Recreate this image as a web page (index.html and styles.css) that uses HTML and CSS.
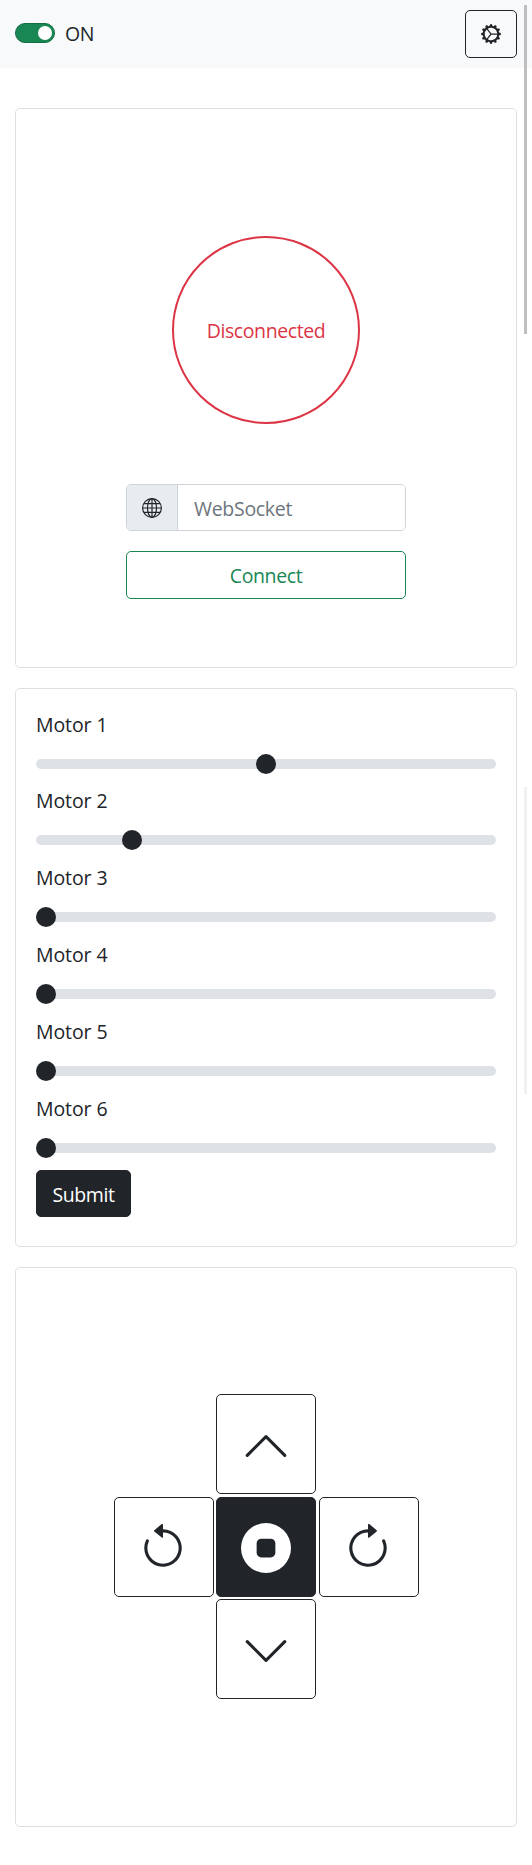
FILE: index.html
```html
<!DOCTYPE html>
<html lang="en">
<head>
<meta charset="utf-8">
<title>Robot control</title>
<link rel="stylesheet" href="styles.css">
</head>
<body>
<header class="navbar">
  <label class="power"><span class="switch"><span class="switch-knob"></span></span><span class="power-text">ON</span></label>
  <button class="btn btn-settings" type="button" aria-label="Settings">
    <svg class="icon" viewBox="0 0 16 16"><path d="M7.068.727c.243-.97 1.62-.97 1.864 0l.071.286a.96.96 0 0 0 1.622.434l.205-.211c.695-.719 1.888-.03 1.613.931l-.08.284a.96.96 0 0 0 1.187 1.187l.283-.081c.96-.275 1.65.918.931 1.613l-.211.205a.96.96 0 0 0 .434 1.622l.286.071c.97.243.97 1.62 0 1.864l-.286.071a.96.96 0 0 0-.434 1.622l.211.205c.719.695.03 1.888-.931 1.613l-.284-.08a.96.96 0 0 0-1.187 1.187l.081.283c.275.96-.918 1.65-1.613.931l-.205-.211a.96.96 0 0 0-1.622.434l-.071.286c-.243.97-1.62.97-1.864 0l-.071-.286a.96.96 0 0 0-1.622-.434l-.205.211c-.695.719-1.888.03-1.613-.931l.08-.284a.96.96 0 0 0-1.186-1.187l-.284.081c-.96.275-1.65-.918-.931-1.613l.211-.205a.96.96 0 0 0-.434-1.622l-.286-.071c-.97-.243-.97-1.62 0-1.864l.286-.071a.96.96 0 0 0 .434-1.622l-.211-.205c-.719-.695-.03-1.888.931-1.613l.284.08a.96.96 0 0 0 1.187-1.186l-.081-.284c-.275-.96.918-1.65 1.613-.931l.205.211a.96.96 0 0 0 1.622-.434l.071-.286zM12.973 8.5H8.25l-2.834 3.779A4.998 4.998 0 0 0 12.973 8.5zm0-1a4.998 4.998 0 0 0-7.557-3.779l2.834 3.78h4.723zM4.617 4.322A4.984 4.984 0 0 0 3.002 8c0 1.455.622 2.765 1.615 3.678L7.375 8 4.617 4.322z"/></svg>
  </button>
</header>

<main class="panels">
  <section class="card card-connection">
    <div class="status"><span class="status-text">Disconnected</span></div>
    <div class="input-group">
      <span class="input-addon">
        <svg class="icon icon-globe" viewBox="0 0 16 16"><circle cx="8" cy="8" r="7.5"/><ellipse cx="8" cy="8" rx="3.6" ry="7.5"/><path d="M8 .5v15M.5 8h15M1.7 4.5h12.6M1.7 11.5h12.6"/></svg>
      </span>
      <input class="input" type="text" placeholder="WebSocket">
    </div>
    <button class="btn btn-connect" type="button"><span class="connect-text">Connect</span></button>
  </section>

  <section class="card card-motors">
    <div class="motor"><label class="motor-label" for="m1">Motor 1</label><input class="range" id="m1" type="range" min="0" max="180" value="90"></div>
    <div class="motor"><label class="motor-label" for="m2">Motor 2</label><input class="range" id="m2" type="range" min="0" max="180" value="35"></div>
    <div class="motor"><label class="motor-label" for="m3">Motor 3</label><input class="range" id="m3" type="range" min="0" max="180" value="0"></div>
    <div class="motor"><label class="motor-label" for="m4">Motor 4</label><input class="range" id="m4" type="range" min="0" max="180" value="0"></div>
    <div class="motor"><label class="motor-label" for="m5">Motor 5</label><input class="range" id="m5" type="range" min="0" max="180" value="0"></div>
    <div class="motor"><label class="motor-label" for="m6">Motor 6</label><input class="range" id="m6" type="range" min="0" max="180" value="0"></div>
    <button class="btn btn-submit" type="button"><span class="submit-text">Submit</span></button>
  </section>

  <section class="card card-drive">
    <div class="pad">
      <button class="btn pad-btn pad-up" type="button" aria-label="Forward"><svg class="icon-lg" viewBox="0 0 16 16"><path d="M7.646 4.646a.5.5 0 0 1 .708 0l6 6a.5.5 0 0 1-.708.708L8 5.707l-5.646 5.647a.5.5 0 0 1-.708-.708l6-6z"/></svg></button>
      <button class="btn pad-btn pad-left" type="button" aria-label="Rotate left"><svg class="icon-lg" viewBox="0 0 16 16"><path d="M8 3a5 5 0 1 1-4.546 2.914.5.5 0 0 0-.908-.417A6 6 0 1 0 8 2v1z"/><path d="M8 4.466V.534a.25.25 0 0 0-.41-.192L5.23 2.308a.25.25 0 0 0 0 .384l2.36 1.966A.25.25 0 0 0 8 4.466z"/></svg></button>
      <button class="btn pad-btn pad-stop" type="button" aria-label="Stop"><svg class="icon-lg" viewBox="0 0 16 16"><path d="M16 8A8 8 0 1 1 0 8a8 8 0 0 1 16 0zM6.5 5A1.5 1.5 0 0 0 5 6.5v3A1.5 1.5 0 0 0 6.5 11h3A1.5 1.5 0 0 0 11 9.5v-3A1.5 1.5 0 0 0 9.5 5h-3z"/></svg></button>
      <button class="btn pad-btn pad-right" type="button" aria-label="Rotate right"><svg class="icon-lg" viewBox="0 0 16 16"><path d="M8 3a5 5 0 1 0 4.546 2.914.5.5 0 0 1 .908-.417A6 6 0 1 1 8 2v1z"/><path d="M8 4.466V.534a.25.25 0 0 1 .41-.192l2.36 1.966c.12.1.12.284 0 .384L8.41 4.658A.25.25 0 0 1 8 4.466z"/></svg></button>
      <button class="btn pad-btn pad-down" type="button" aria-label="Backward"><svg class="icon-lg" viewBox="0 0 16 16"><path d="M1.646 4.646a.5.5 0 0 1 .708 0L8 10.293l5.646-5.647a.5.5 0 0 1 .708.708l-6 6a.5.5 0 0 1-.708 0l-6-6a.5.5 0 0 1 0-.708z"/></svg></button>
    </div>
  </section>
</main>
<div class="scroll-thumb"></div>
<div class="scroll-thumb scroll-thumb-faint"></div>
</body>
</html>
```
FILE: styles.css
```css
* { box-sizing: border-box; }

body {
  margin: 0;
  position: relative;
  height: 1865px;
  overflow: hidden;
  background: #fff;
  color: #212529;
  font-family: "Open Sans", "Noto Sans", sans-serif;
  font-size: 19.5px;
  line-height: 30px;
  letter-spacing: -0.4px;
}

.navbar {
  display: flex;
  align-items: center;
  justify-content: space-between;
  height: 68px;
  padding: 0 15px;
  background: #f8f9fa;
}

.power { display: flex; align-items: center; gap: 10px; }
.power-text { letter-spacing: -0.3px; }

.switch {
  display: flex;
  justify-content: flex-end;
  align-items: center;
  width: 40px;
  height: 20px;
  margin-bottom: 2px;
  padding-right: 2px;
  border: 1px solid #146c43;
  border-radius: 10px;
  background: #198754;
}

.switch-knob { width: 14px; height: 14px; border-radius: 50%; background: #fff; }

.btn {
  display: flex;
  align-items: center;
  justify-content: center;
  margin: 0;
  padding: 0;
  border: 1px solid #212529;
  border-radius: 5px;
  background: transparent;
  color: #212529;
  font: inherit;
  letter-spacing: inherit;
}

.btn-settings { width: 52px; height: 48px; }

.icon { display: block; width: 20px; height: 20px; fill: currentColor; }
.icon-globe { fill: none; stroke: currentColor; stroke-width: 0.95; }

.panels {
  display: flex;
  flex-direction: column;
  gap: 20px;
  padding: 40px 15px 0;
}

.card {
  height: 560px;
  border: 1px solid #dfdfdf;
  border-radius: 5px;
  background: #fff;
}

.card-connection {
  display: flex;
  flex-direction: column;
  align-items: center;
  padding-top: 127px;
}

.status {
  display: flex;
  align-items: center;
  justify-content: center;
  width: 188px;
  height: 188px;
  padding-top: 2px;
  border: 2px solid #dc3545;
  border-radius: 50%;
  color: #dc3545;
}

.input-group {
  display: flex;
  width: 280px;
  height: 47px;
  margin: 60px 0 20px;
  border: 1px solid #ced4da;
  border-radius: 5px;
  overflow: hidden;
}

.input-addon {
  display: flex;
  align-items: center;
  justify-content: center;
  width: 51px;
  border-right: 1px solid #ced4da;
  background: #e9ecef;
}

.input {
  flex: 1;
  min-width: 0;
  padding: 3px 15px 0 16px;
  border: 0;
  background: #fff;
  color: #212529;
  font: inherit;
  letter-spacing: -0.3px;
}
.input::placeholder { color: #6c757d; opacity: 1; }

.btn-connect { width: 280px; height: 48px; padding-top: 2px; border-color: #198754; color: #198754; }

.card-motors { height: 559px; padding: 20px 20px 0; }

.motor { display: flex; flex-direction: column; height: 77px; }
.motor:first-child { height: 76px; }
.motor-label { height: 40px; padding-top: 1px; letter-spacing: -0.1px; }

.range {
  -webkit-appearance: none;
  appearance: none;
  width: 100%;
  height: 30px;
  margin: 0;
  background: transparent;
}
.range::-webkit-slider-runnable-track { height: 10px; border-radius: 5px; background: #dee2e6; }
.range::-webkit-slider-thumb {
  -webkit-appearance: none;
  width: 20px;
  height: 20px;
  margin-top: -5px;
  border: 0;
  border-radius: 50%;
  background: #212529;
}

.btn-submit { width: 95px; height: 47px; padding-top: 3px; background: #212529; color: #fff; }

.card-drive { display: flex; justify-content: center; padding-top: 126px; }

.pad {
  display: grid;
  grid-template-columns: repeat(3, 100px);
  grid-template-rows: repeat(3, 100px);
  gap: 2.5px;
  grid-template-areas: ". up ." "left stop right" ". down .";
  height: 305px;
}
.pad-up { grid-area: up; padding-top: 2px; }
.pad-left { grid-area: left; padding-right: 1px; }
.pad-stop { grid-area: stop; background: #212529; color: #fff; }
.pad-right { grid-area: right; padding-right: 1px; }
.pad-down { grid-area: down; padding-top: 2px; }

.icon-lg { display: block; width: 50px; height: 50px; margin-top: 2px; fill: currentColor; }

.scroll-thumb {
  position: absolute;
  top: 5px;
  left: 524px;
  width: 3px;
  height: 329px;
  background: #bfbfbf;
}
.scroll-thumb-faint { top: 787px; height: 307px; background: #f1f1f1; }
```
